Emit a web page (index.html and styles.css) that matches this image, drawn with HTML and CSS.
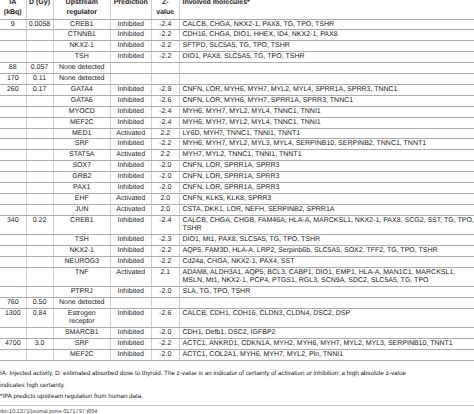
FILE: index.html
```html
<!DOCTYPE html>
<html>
<head>
<meta charset="utf-8">
<link rel="stylesheet" href="styles.css">
</head>
<body>
<div class="page">
<table class="t">
<colgroup>
<col class="c1"><col class="c2"><col class="c3"><col class="c4"><col class="c5"><col class="c6">
</colgroup>
<thead>
<tr><th>IA<br>(kBq)</th><th>D (Gy)</th><th>Upstream<br>regulator</th><th>Prediction</th><th>Z-<br>value</th><th class="mol">Involved molecules*</th></tr>
</thead>
<tbody>
<tr><td>9</td><td>0.0058</td><td>CREB1</td><td>Inhibited</td><td>-2.4</td><td class="mol">CALCB, CHGA, NKX2-1, PAX8, TG, TPO, TSHR</td></tr>
<tr><td></td><td></td><td>CTNNB1</td><td>Inhibited</td><td>-2.2</td><td class="mol">CDH16, CHGA, DIO1, HHEX, ID4, NKX2-1, PAX8</td></tr>
<tr><td></td><td></td><td>NKX2-1</td><td>Inhibited</td><td>-2.2</td><td class="mol">SFTPD, SLC5A5, TG, TPO, TSHR</td></tr>
<tr><td></td><td></td><td>TSH</td><td>Inhibited</td><td>-2.2</td><td class="mol">DIO1, PAX8, SLC5A5, TG, TPO, TSHR</td></tr>
<tr><td>88</td><td>0.057</td><td>None detected</td><td></td><td></td><td class="mol"></td></tr>
<tr><td>170</td><td>0.11</td><td>None detected</td><td></td><td></td><td class="mol"></td></tr>
<tr><td>260</td><td>0.17</td><td>GATA4</td><td>Inhibited</td><td>-2.9</td><td class="mol">CNFN, LOR, MYH6, MYH7, MYL2, MYL4, SPRR1A, SPRR3, TNNC1</td></tr>
<tr><td></td><td></td><td>GATA6</td><td>Inhibited</td><td>-2.6</td><td class="mol">CNFN, LOR, MYH6, MYH7, SPRR1A, SPRR3, TNNC1</td></tr>
<tr><td></td><td></td><td>MYOCD</td><td>Inhibited</td><td>-2.4</td><td class="mol">MYH6, MYH7, MYL2, MYL4, TNNC1, TNNI1</td></tr>
<tr><td></td><td></td><td>MEF2C</td><td>Inhibited</td><td>-2.4</td><td class="mol">MYH6, MYH7, MYL2, MYL4, TNNC1, TNNI1</td></tr>
<tr><td></td><td></td><td>MED1</td><td>Activated</td><td>2.2</td><td class="mol">LY6D, MYH7, TNNC1, TNNI1, TNNT1</td></tr>
<tr><td></td><td></td><td>SRF</td><td>Inhibited</td><td>-2.2</td><td class="mol">MYH6, MYH7, MYL2, MYL3, MYL4, SERPINB10, SERPINB2, TNNC1, TNNT1</td></tr>
<tr><td></td><td></td><td>STAT5A</td><td>Activated</td><td>2.2</td><td class="mol">MYH7, MYL2, TNNC1, TNNI1, TNNT1</td></tr>
<tr><td></td><td></td><td>SOX7</td><td>Inhibited</td><td>-2.0</td><td class="mol">CNFN, LOR, SPRR1A, SPRR3</td></tr>
<tr><td></td><td></td><td>GRB2</td><td>Inhibited</td><td>-2.0</td><td class="mol">CNFN, LOR, SPRR1A, SPRR3</td></tr>
<tr><td></td><td></td><td>PAX1</td><td>Inhibited</td><td>-2.0</td><td class="mol">CNFN, LOR, SPRR1A, SPRR3</td></tr>
<tr><td></td><td></td><td>EHF</td><td>Activated</td><td>2.0</td><td class="mol">CNFN, KLK5, KLK8, SPRR3</td></tr>
<tr><td></td><td></td><td>JUN</td><td>Activated</td><td>2.0</td><td class="mol">CSTA, DKK1, LOR, NEFH, SERPINB2, SPRR1A</td></tr>
<tr><td>340</td><td>0.22</td><td>CREB1</td><td>Inhibited</td><td>-2.4</td><td class="mol">CALCB, CHGA, CHGB, FAM46A, HLA-A, MARCKSL1, NKX2-1, PAX8, SCG2, SST, TG, TPO,<br>TSHR</td></tr>
<tr><td></td><td></td><td>TSH</td><td>Inhibited</td><td>-2.3</td><td class="mol">DIO1, Mt1, PAX8, SLC5A5, TG, TPO, TSHR</td></tr>
<tr><td></td><td></td><td>NKX2-1</td><td>Inhibited</td><td>-2.2</td><td class="mol">AQP5, FAM3D, HLA-A, LRP2, Serpinb6b, SLC5A5, SOX2, TFF2, TG, TPO, TSHR</td></tr>
<tr><td></td><td></td><td>NEUROG3</td><td>Inhibited</td><td>-2.2</td><td class="mol">Cd24a, CHGA, NKX2-1, PAX4, SST</td></tr>
<tr><td></td><td></td><td>TNF</td><td>Activated</td><td>2.1</td><td class="mol">ADAM8, ALDH3A1, AQP5, BCL3, CABP1, DIO1, EMP1, HLA-A, MAN1C1, MARCKSL1,<br>MSLN, Mt1, NKX2-1, PCP4, PTGS1, RGL3, SCN9A, SDC2, SLC5A5, TG, TPO</td></tr>
<tr><td></td><td></td><td>PTPRJ</td><td>Inhibited</td><td>-2.0</td><td class="mol">SLA, TG, TPO, TSHR</td></tr>
<tr><td>760</td><td>0.50</td><td>None detected</td><td></td><td></td><td class="mol"></td></tr>
<tr><td>1300</td><td>0.84</td><td>Estrogen<br>receptor</td><td>Inhibited</td><td>-2.6</td><td class="mol">CALCB, CDH1, CDH16, CLDN3, CLDN4, DSC2, DSP</td></tr>
<tr><td></td><td></td><td>SMARCB1</td><td>Inhibited</td><td>-2.0</td><td class="mol">CDH1, Defb1, DSC2, IGFBP2</td></tr>
<tr><td>4700</td><td>3.0</td><td>SRF</td><td>Inhibited</td><td>-2.2</td><td class="mol">ACTC1, ANKRD1, CDKN1A, MYH2, MYH6, MYH7, MYL2, MYL3, SERPINB10, TNNT1</td></tr>
<tr><td></td><td></td><td>MEF2C</td><td>Inhibited</td><td>-2.0</td><td class="mol">ACTC1, COL2A1, MYH6, MYH7, MYL2, Pln, TNNI1</td></tr>
</tbody>
</table>
<div class="notes">
<p>IA: Injected activity, D: estimated absorbed dose to thyroid. The z-value is an indicator of certainty of activation or inhibition; a high absolute z-value<br>indicates high certainty.</p>
<p>*IPA predicts upstream regulation from human data.</p>
</div>
<div class="doi">doi:10.1371/journal.pone.0171797.t004</div>
</div>
</body>
</html>
```

FILE: styles.css
```css
html, body {
  margin: 0;
  padding: 0;
  background: #ffffff;
}

body {
  font-family: "Liberation Sans", Arial, sans-serif;
  color: #222222;
  text-rendering: geometricPrecision;
}

.page {
  width: 474px;
  margin-top: -4px;
}

.t {
  width: 474px;
  border-collapse: collapse;
  table-layout: fixed;
  font-size: 7px;
  line-height: 8.4px;
}

.c1 { width: 26px; }
.c2 { width: 27px; }
.c3 { width: 57.5px; }
.c4 { width: 40.5px; }
.c5 { width: 28.5px; }
.c6 { width: auto; }

.t th,
.t td {
  border-top: 1px solid #adadad;
  border-bottom: 1px solid #adadad;
  border-left: 1px solid #cdcdcd;
  border-right: 1px solid #cdcdcd;
  padding: 1px 1px 0.5px;
  vertical-align: top;
  text-align: center;
  white-space: nowrap;
}

.t th {
  font-weight: bold;
  line-height: 9.5px;
  padding-bottom: 1.5px;
}

.t tr > :first-child { border-left: none; }
.t tr > :last-child { border-right: none; }

.t .mol {
  text-align: left;
  padding-left: 2.5px;
}

.notes {
  font-size: 6.25px;
  line-height: 11.5px;
  padding-top: 7px;
  padding-bottom: 2px;
  border-bottom: 1px solid #c4c4c4;
}

.notes p {
  margin: 0;
}

.doi {
  font-size: 5.6px;
  line-height: 7px;
  color: #444444;
  padding-top: 3.5px;
}
```
